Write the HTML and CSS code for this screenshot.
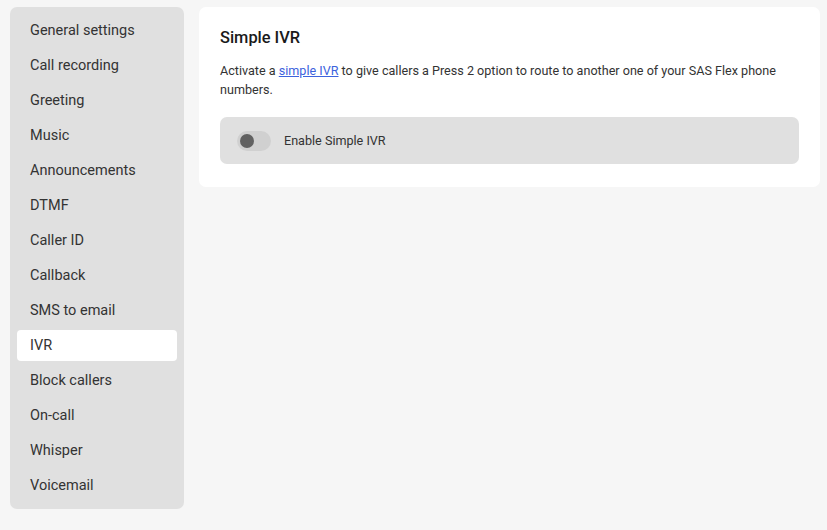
FILE: index.html
```html
<!DOCTYPE html>
<html lang="en">
<head>
    <meta charset="UTF-8">
    <meta name="viewport" content="width=device-width, initial-scale=1.0">
    <title>IVR settings</title>
    <link rel="stylesheet" href="styles.css">
</head>
<body>
    <div class="layout">
        <nav class="sidebar">
            <a class="nav-item" href="#">General settings</a>
            <a class="nav-item" href="#">Call recording</a>
            <a class="nav-item" href="#">Greeting</a>
            <a class="nav-item" href="#">Music</a>
            <a class="nav-item" href="#">Announcements</a>
            <a class="nav-item" href="#">DTMF</a>
            <a class="nav-item" href="#">Caller ID</a>
            <a class="nav-item" href="#">Callback</a>
            <a class="nav-item" href="#">SMS to email</a>
            <a class="nav-item active" href="#">IVR</a>
            <a class="nav-item" href="#">Block callers</a>
            <a class="nav-item" href="#">On-call</a>
            <a class="nav-item" href="#">Whisper</a>
            <a class="nav-item" href="#">Voicemail</a>
        </nav>

        <!-- settings panel -->
        <main class="panel">
            <h2>Simple IVR</h2>
            <p class="desc">Activate a <a href="#">simple IVR</a> to give callers a Press 2 option to route to another one of your SAS Flex phone numbers.</p>
            <label class="toggle-row">
                <span class="switch"><span class="knob"></span></span>
                <span class="toggle-label">Enable Simple IVR</span>
            </label>
        </main>
    </div>
</body>
</html>
```

FILE: styles.css
```css
body {
    font-family: Roboto, "Liberation Sans", Arial, sans-serif;
    margin: 0;
    padding: 0;
    background-color: #f6f6f6;
    color: #212121;
}

.layout {
    display: flex;
    align-items: flex-start;
    gap: 15px;
    padding: 7px 7px 0 10px;
}

.sidebar {
    width: 174px;
    flex-shrink: 0;
    background-color: #e0e0e0;
    border-radius: 7px;
    padding: 8px 7px;
    box-sizing: border-box;
    display: flex;
    flex-direction: column;
    gap: 4px;
}

.nav-item {
    display: block;
    height: 31px;
    line-height: 31px;
    padding: 0 13px;
    border-radius: 4px;
    font-size: 14.5px;
    color: #333;
    text-decoration: none;
}

.nav-item.active {
    background-color: #fff;
}

.panel {
    flex: 1;
    background-color: #fff;
    border-radius: 7px;
    padding: 22px 21px 23px;
}

.panel h2 {
    margin: 0;
    font-size: 16.4px;
    font-weight: 500;
    line-height: 18px;
    color: #1a1a1a;
}

.desc {
    margin: 14px 0 18px;
    font-size: 12.6px;
    line-height: 19px;
    color: #333;
}

.desc a {
    color: #3d63dd;
}

.toggle-row {
    display: flex;
    align-items: center;
    height: 47px;
    padding: 0 17px;
    background-color: #e0e0e0;
    border-radius: 7px;
    cursor: pointer;
}

.switch {
    position: relative;
    width: 34px;
    height: 20px;
    border-radius: 10px;
    background-color: #d0d0d0;
    margin-right: 13px;
}

.knob {
    position: absolute;
    left: 3px;
    top: 3px;
    width: 14px;
    height: 14px;
    border-radius: 50%;
    background-color: #616161;
}

.toggle-label {
    font-size: 12.6px;
    color: #333;
}
```
